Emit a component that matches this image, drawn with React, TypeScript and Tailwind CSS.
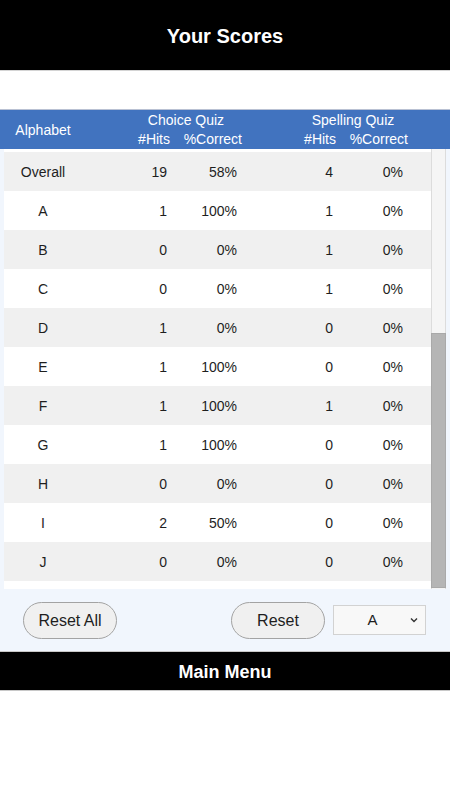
import React from "react";

type Row = { name: string; hits: number; pct: string; hits2: number; pct2: string };

const rows: Row[] = [
  { name: "Overall", hits: 19, pct: "58%", hits2: 4, pct2: "0%" },
  { name: "A", hits: 1, pct: "100%", hits2: 1, pct2: "0%" },
  { name: "B", hits: 0, pct: "0%", hits2: 1, pct2: "0%" },
  { name: "C", hits: 0, pct: "0%", hits2: 1, pct2: "0%" },
  { name: "D", hits: 1, pct: "0%", hits2: 0, pct2: "0%" },
  { name: "E", hits: 1, pct: "100%", hits2: 0, pct2: "0%" },
  { name: "F", hits: 1, pct: "100%", hits2: 1, pct2: "0%" },
  { name: "G", hits: 1, pct: "100%", hits2: 0, pct2: "0%" },
  { name: "H", hits: 0, pct: "0%", hits2: 0, pct2: "0%" },
  { name: "I", hits: 2, pct: "50%", hits2: 0, pct2: "0%" },
  { name: "J", hits: 0, pct: "0%", hits2: 0, pct2: "0%" },
];

export default function App() {
  return (
    <div className="w-[450px] h-[800px] bg-white font-['Liberation_Sans',Arial,sans-serif] flex flex-col">
      <div className="h-[71px] shrink-0 bg-black border-b border-[#d4d4d4] flex items-center justify-center">
        <span className="text-white font-bold text-[20px] pt-px">Your Scores</span>
      </div>
      <div className="h-[39px] shrink-0 bg-white border-b border-[#b9c1d3]" />

      <div className="h-[39px] shrink-0 bg-[#4173bf] text-white text-[14px] flex pt-px">
        <div className="w-[86px] text-center self-center">Alphabet</div>
        <div className="w-[34px]" />
        <div className="w-[132px] flex flex-col leading-[19px]">
          <div className="text-center">Choice Quiz</div>
          <div className="flex">
            <div className="w-[50px] text-right">#Hits</div>
            <div className="w-[72px] text-right">%Correct</div>
          </div>
        </div>
        <div className="w-[34px]" />
        <div className="w-[134px] flex flex-col leading-[19px]">
          <div className="text-center">Spelling Quiz</div>
          <div className="flex">
            <div className="w-[50px] text-right">#Hits</div>
            <div className="w-[72px] text-right">%Correct</div>
          </div>
        </div>
      </div>

      <div className="h-[440px] shrink-0 bg-[#f1f6fd] px-[4px] flex">
        <div className="w-[427px] bg-white pt-[3px] overflow-hidden text-[14px] text-[#1e1e1e]">
          {rows.map((r, i) => (
            <div
              key={r.name}
              className={`h-[39px] pt-[2px] flex items-center ${i % 2 === 0 ? "bg-[#f0f0f0]" : "bg-white"}`}
            >
              <div className="w-[78px] text-center">{r.name}</div>
              <div className="w-[85px] text-right">{r.hits}</div>
              <div className="w-[70px] text-right">{r.pct}</div>
              <div className="w-[96px] text-right">{r.hits2}</div>
              <div className="w-[70px] text-right">{r.pct2}</div>
            </div>
          ))}
        </div>
        <div className="w-[15px] bg-[#f5f5f5] border-x border-[#dcdcdc] flex flex-col">
          <div className="h-[184px]" />
          <div className="h-[255px] bg-[#b5b5b5] border border-[#a9a9a9] -mx-px" />
        </div>
      </div>

      <div className="h-[62px] shrink-0 bg-[#f1f6fd] flex items-start pt-[13px] text-[16px] text-[#1e1e1e]">
        <div className="ml-[23px] w-[94px] h-[37px] rounded-full bg-[#f0f0f0] border border-[#a3a3a3] flex items-center justify-center">
          Reset All
        </div>
        <div className="ml-[114px] w-[94px] h-[37px] rounded-full bg-[#f0f0f0] border border-[#a3a3a3] flex items-center justify-center">
          Reset
        </div>
        <div className="ml-[8px] mt-[3px] w-[93px] h-[30px] bg-[#f8f8f8] border border-[#d2d2d2] flex items-center text-[15px]">
          <span className="flex-1 text-center pl-[2px]">A</span>
          <svg width="10" height="10" viewBox="0 0 10 10" className="mr-[6px]">
            <path d="M2 3.5 L5 6.5 L8 3.5" fill="none" stroke="#333" strokeWidth="1.4" />
          </svg>
        </div>
      </div>

      <div className="h-[40px] shrink-0 bg-black border-y border-[#c8c8c8] flex items-center justify-center">
        <span className="text-white font-bold text-[18px] pt-[2px]">Main Menu</span>
      </div>
    </div>
  );
}
